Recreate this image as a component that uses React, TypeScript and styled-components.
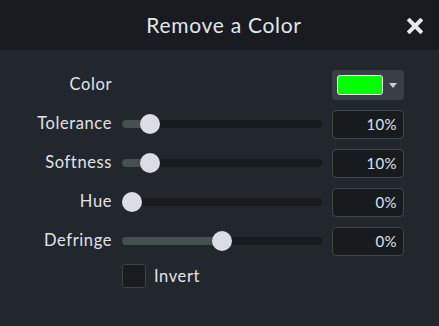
import React from "react";
import styled, { createGlobalStyle } from "styled-components";

const Global = createGlobalStyle`
  html, body { margin: 0; padding: 0; background: #22262d; }
  * { box-sizing: border-box; }
`;

const Panel = styled.div`
  width: 439px;
  height: 326px;
  background: #22262d;
  font-family: Lato, "Open Sans", sans-serif;
  color: #e0e3e9;
  overflow: hidden;
`;

const Header = styled.div`
  position: relative;
  height: 50px;
  background: #181b1f;
  display: flex;
  align-items: center;
  justify-content: center;
  padding: 0 0 2px 9px;
`;

const Title = styled.div`
  font-size: 21px;
  color: #e3e6eb;
  letter-spacing: 0.7px;
`;

const Close = styled.button`
  position: absolute;
  right: 16px;
  top: 18px;
  width: 16px;
  height: 16px;
  padding: 0;
  border: 0;
  background: none;
  display: flex;
`;

const Form = styled.div`
  display: grid;
  grid-template-columns: 103px 200px 72px;
  column-gap: 10px;
  row-gap: 9px;
  grid-auto-rows: 30px;
  padding: 20px 0 0 9px;
  align-items: center;
`;

const Label = styled.div`
  font-size: 16.5px;
  letter-spacing: 0.6px;
  line-height: 20px;
  padding-bottom: 3px;
  text-align: right;
  color: #e0e3e9;
`;

const Track = styled.div`
  position: relative;
  height: 8px;
  border-radius: 4px;
  background: #171b1d;
`;

const Fill = styled.div`
  height: 100%;
  border-radius: 4px;
  background: #45514f;
`;

const Thumb = styled.div`
  position: absolute;
  top: 50%;
  width: 20px;
  height: 20px;
  margin-left: -10px;
  margin-top: -10px;
  border-radius: 50%;
  background: #dadde4;
`;

const ValueBox = styled.div`
  height: 29px;
  border: 1px solid #3d4849;
  border-radius: 4px;
  background: #171b1d;
  display: flex;
  align-items: center;
  justify-content: flex-end;
  padding: 0 6px 1px 0;
  font-size: 15px;
  letter-spacing: 0.4px;
  color: #dde2ea;
`;

const ColorButton = styled.div`
  grid-column: 3;
  height: 30px;
  border-radius: 4px;
  background: #3a3f47;
  display: flex;
  align-items: center;
  padding-left: 5px;
  gap: 6px;
`;

const Swatch = styled.div<{ $color: string }>`
  width: 46px;
  height: 20px;
  border: 1px solid #f4f6f8;
  border-radius: 3px;
  background: ${(p) => p.$color};
`;

const Arrow = styled.div`
  width: 0;
  height: 0;
  border-left: 4.5px solid transparent;
  border-right: 4.5px solid transparent;
  border-top: 5px solid #c9cdd4;
`;

const CheckRow = styled.label`
  grid-column: 2 / 4;
  display: flex;
  align-items: center;
  gap: 8px;
  margin-top: -9px;
  font-size: 16.5px;
  letter-spacing: 0.6px;
  color: #e0e3e9;
`;

const Box = styled.div`
  width: 24px;
  height: 24px;
  border: 1px solid #3b4647;
  border-radius: 3px;
  background: #181c1e;
`;

const Spacer = styled.div``;

function Slider({ value }: { value: number }) {
  const pos = 10 + (180 * value) / 100;
  return (
    <Track>
      <Fill style={{ width: pos }} />
      <Thumb style={{ left: pos }} />
    </Track>
  );
}

const rows = [
  { label: "Tolerance", value: 10 },
  { label: "Softness", value: 10 },
  { label: "Hue", value: 0, text: "0%" },
  { label: "Defringe", value: 50, text: "0%" },
];

export default function App() {
  return (
    <>
      <Global />
      <Panel>
        <Header>
          <Title>Remove a Color</Title>
          <Close aria-label="Close">
            <svg width="16" height="16" viewBox="0 0 16 16">
              <path d="M2.5 2.5 L13.5 13.5 M13.5 2.5 L2.5 13.5" stroke="#e6e8ec" strokeWidth="4" strokeLinecap="square" />
            </svg>
          </Close>
        </Header>
        <Form>
          <Label>Color</Label>
          <Spacer />
          <ColorButton>
            <Swatch $color="#00ff00" />
            <Arrow />
          </ColorButton>
          {rows.map((r) => (
            <React.Fragment key={r.label}>
              <Label>{r.label}</Label>
              <Slider value={r.value} />
              <ValueBox>{r.text ?? `${r.value}%`}</ValueBox>
            </React.Fragment>
          ))}
          <CheckRow>
            <Box />
            <span>Invert</span>
          </CheckRow>
        </Form>
      </Panel>
    </>
  );
}
